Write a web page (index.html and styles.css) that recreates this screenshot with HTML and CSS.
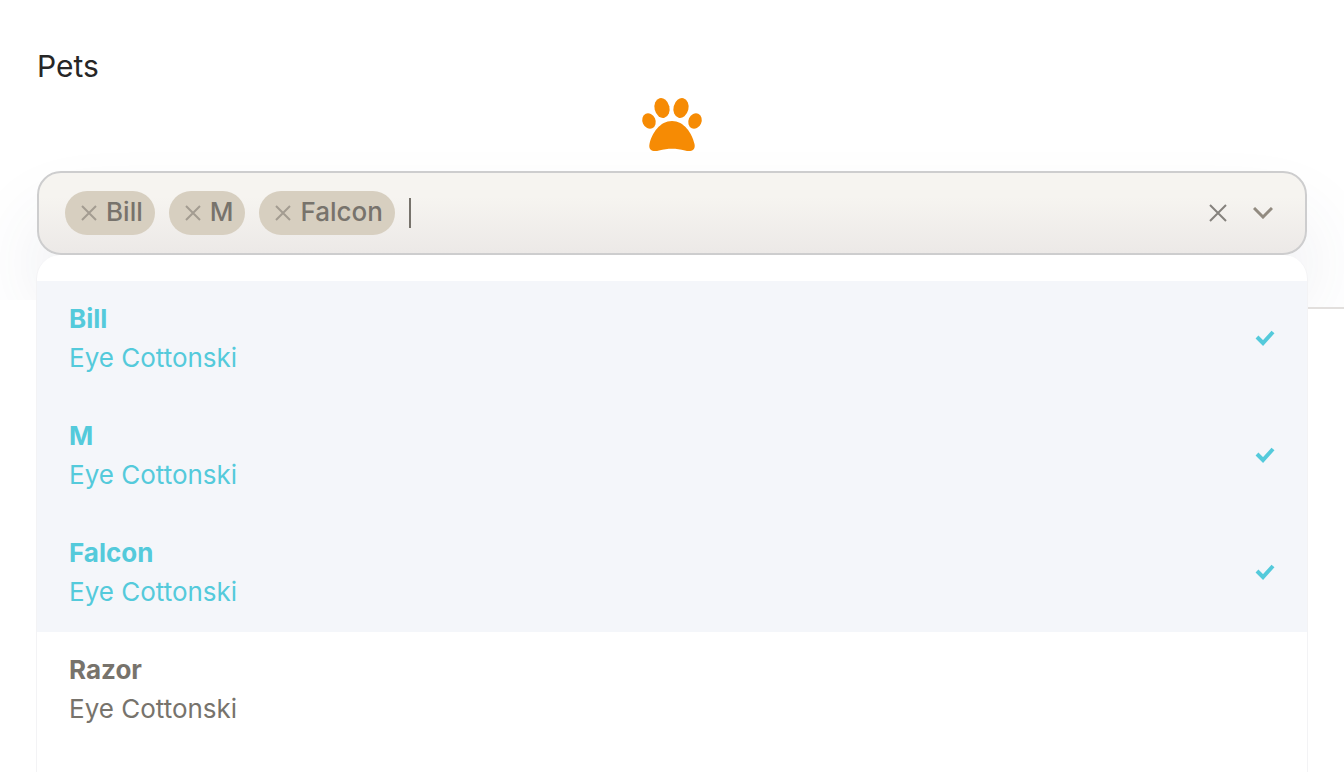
FILE: index.html
```
<!DOCTYPE html>
<html lang="en">
<head>
  <meta charset="UTF-8">
  <meta name="viewport" content="width=device-width, initial-scale=1">
  <title>Pets</title>
  <link rel="stylesheet" href="styles.css">
</head>
<body>

  <main class="page">
    <section class="field">
      <label for="pets" class="field-label">Pets</label>

      <svg class="paw" viewBox="0 0 60 54" aria-hidden="true">
        <ellipse cx="20" cy="10" rx="7.500" ry="10" transform="rotate(-14 20 10)"/>
        <ellipse cx="39" cy="10" rx="7.500" ry="10" transform="rotate(14 39 10)"/>
        <ellipse cx="7" cy="23" rx="6.500" ry="8" transform="rotate(-24 7 23)"/>
        <ellipse cx="53" cy="23" rx="6.500" ry="8" transform="rotate(24 53 23)"/>
        <path d="M30 23C42 23 50 35 52.500 46C54 53 48 54 43 52.500C34 50 26 50 17 52.500C12 54 6 53 7.500 46C10 35 18 23 30 23Z"/>
      </svg>

      <div class="select">
        <div class="tags">
          <span class="tag">
            <button type="button" aria-label="Remove Bill"><svg viewBox="0 0 16 16"><path d="M1 1L15 15M15 1L1 15"/></svg></button>
            Bill
          </span>
          <span class="tag">
            <button type="button" aria-label="Remove M"><svg viewBox="0 0 16 16"><path d="M1 1L15 15M15 1L1 15"/></svg></button>
            M
          </span>
          <span class="tag">
            <button type="button" aria-label="Remove Falcon"><svg viewBox="0 0 16 16"><path d="M1 1L15 15M15 1L1 15"/></svg></button>
            Falcon
          </span>
          <input type="text" id="pets" class="search" role="combobox" aria-expanded="true" aria-controls="pet-list" autocomplete="off">
        </div>
        <button type="button" class="clear" aria-label="Clear all">
          <svg viewBox="0 0 18 18"><path d="M1 1L17 17M17 1L1 17"/></svg>
        </button>
        <button type="button" class="toggle" aria-label="Toggle list">
          <svg viewBox="0 0 20 12"><path d="M1 1L10 10L19 1"/></svg>
        </button>
      </div>
    </section>

    <ul class="menu" id="pet-list" role="listbox" aria-label="Pets" aria-multiselectable="true">
      <li class="option selected" role="option" aria-selected="true">
        <div>
          <div class="name">Bill</div>
          <div class="owner">Eye Cottonski</div>
        </div>
        <svg class="check" viewBox="0 0 20 16"><path d="M2 7L8 13L18 2"/></svg>
      </li>
      <li class="option selected" role="option" aria-selected="true">
        <div>
          <div class="name">M</div>
          <div class="owner">Eye Cottonski</div>
        </div>
        <svg class="check" viewBox="0 0 20 16"><path d="M2 7L8 13L18 2"/></svg>
      </li>
      <li class="option selected" role="option" aria-selected="true">
        <div>
          <div class="name">Falcon</div>
          <div class="owner">Eye Cottonski</div>
        </div>
        <svg class="check" viewBox="0 0 20 16"><path d="M2 7L8 13L18 2"/></svg>
      </li>
      <li class="option" role="option" aria-selected="false">
        <div>
          <div class="name">Razor</div>
          <div class="owner">Eye Cottonski</div>
        </div>
      </li>
    </ul>
  </main>

</body>
</html>
```
FILE: styles.css
```
:root {
  --text: #77736c;
  --accent: #54cadb;
  --paw: #f68b04;
  --selected: #f4f6fa;
  --tag: #d7cfc0;
}

* {
  box-sizing: border-box;
}

body {
  margin: 0;
  background: #fff;
  color: var(--text);
  font-family: Inter, "Liberation Sans", sans-serif;
  font-size: 26px;
}

button {
  padding: 0;
  border: none;
  background: none;
  cursor: pointer;
}

svg {
  display: block;
  fill: none;
}

.page {
  position: relative;
  min-height: 100vh;
}

/* Field */
.field {
  position: relative;
  display: flex;
  flex-direction: column;
  height: 309px;
  padding: 48px 37px 0;
  border-bottom: 2px solid #e2dfdd;
  overflow: hidden;
}

.page::before {
  content: "";
  position: absolute;
  z-index: 1;
  top: 300px;
  left: 0;
  width: 36px;
  bottom: 0;
  background: #fff;
}

.field-label {
  color: #262626;
  font-size: 30px;
  line-height: 36px;
}

.paw {
  align-self: center;
  width: 60px;
  height: 54px;
  margin: 14px 0 19px;
  fill: var(--paw);
  overflow: visible;
}

.select {
  display: flex;
  align-items: center;
  height: 84px;
  padding: 0 32px 0 26px;
  border: 2px solid #cdcdce;
  border-radius: 24px;
  background: linear-gradient(#f6f4f0 30%, #ece9e7);
  box-shadow: 0 50px 80px rgba(60, 65, 110, 0.1);
}

.tags {
  display: flex;
  flex: 1;
  align-items: center;
  gap: 14px;
}

.tag {
  display: flex;
  align-items: center;
  gap: 9px;
  height: 44px;
  padding: 0 12px 2px 16px;
  border-radius: 22px;
  background: var(--tag);
  font-weight: 500;
  line-height: 34px;
}

.tag svg {
  width: 16px;
  height: 16px;
  margin-top: 2px;
  stroke: #a39c91;
  stroke-width: 2;
}

.search {
  flex: 1;
  min-width: 0;
  height: 30px;
  padding: 0;
  border: none;
  border-left: 2px solid #77736c;
  outline: none;
  background: none;
  color: inherit;
  font: inherit;
}

.clear svg {
  width: 18px;
  height: 18px;
  stroke: #85827d;
  stroke-width: 2;
}

.toggle {
  margin-left: 26px;
}

.toggle svg {
  width: 20px;
  height: 12px;
  stroke: #928b80;
  stroke-width: 3;
}

/* Dropdown */
.menu {
  position: absolute;
  z-index: 2;
  top: 255px;
  right: 36px;
  bottom: 0;
  left: 36px;
  margin: 0;
  padding: 26px 0 0;
  border: solid #f3f3f5;
  border-width: 0 1px;
  border-radius: 24px 24px 0 0;
  background: #fff;
  list-style: none;
}

.option {
  display: flex;
  align-items: center;
  justify-content: space-between;
  height: 117px;
  padding: 0 32px 3px;
  line-height: 39px;
  cursor: pointer;
}

.option.selected {
  background: var(--selected);
  color: var(--accent);
}

.name {
  font-weight: 700;
}

.check {
  width: 20px;
  height: 16px;
  stroke: var(--accent);
  stroke-width: 4;
}
```
